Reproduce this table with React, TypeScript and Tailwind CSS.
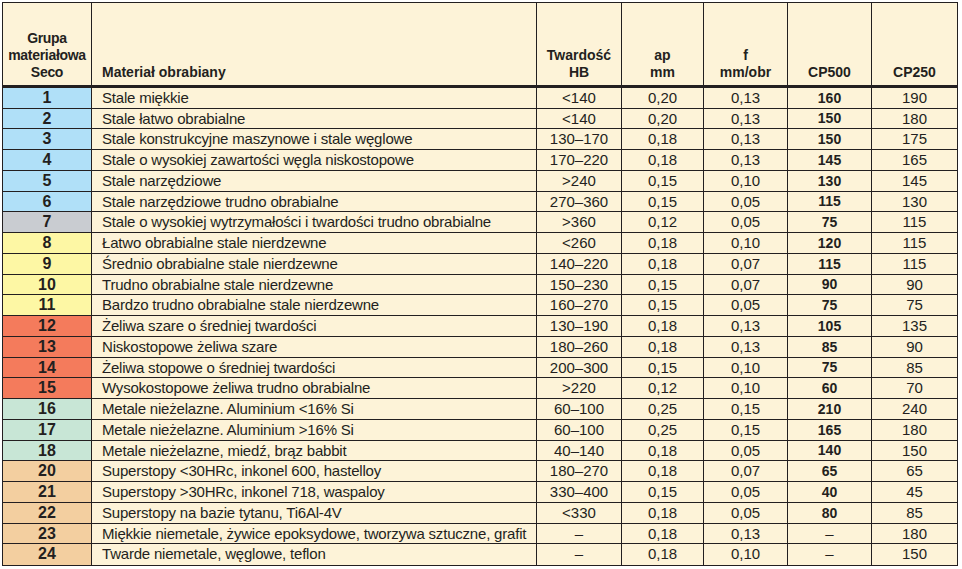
import React from "react";

const rows: { g: string; bg: string; name: string; hb: string; ap: string; f: string; cp5: string; cp2: string }[] = [
  { g: "1", bg: "bg-[#b0e0f8]", name: "Stale miękkie", hb: "<140", ap: "0,20", f: "0,13", cp5: "160", cp2: "190" },
  { g: "2", bg: "bg-[#b0e0f8]", name: "Stale łatwo obrabialne", hb: "<140", ap: "0,20", f: "0,13", cp5: "150", cp2: "180" },
  { g: "3", bg: "bg-[#b0e0f8]", name: "Stale konstrukcyjne maszynowe i stale węglowe", hb: "130–170", ap: "0,18", f: "0,13", cp5: "150", cp2: "175" },
  { g: "4", bg: "bg-[#b0e0f8]", name: "Stale o wysokiej zawartości węgla niskostopowe", hb: "170–220", ap: "0,18", f: "0,13", cp5: "145", cp2: "165" },
  { g: "5", bg: "bg-[#b0e0f8]", name: "Stale narzędziowe", hb: ">240", ap: "0,15", f: "0,10", cp5: "130", cp2: "145" },
  { g: "6", bg: "bg-[#b0e0f8]", name: "Stale narzędziowe trudno obrabialne", hb: "270–360", ap: "0,15", f: "0,05", cp5: "115", cp2: "130" },
  { g: "7", bg: "bg-[#c9ccd1]", name: "Stale o wysokiej wytrzymałości i twardości trudno obrabialne", hb: ">360", ap: "0,12", f: "0,05", cp5: "75", cp2: "115" },
  { g: "8", bg: "bg-[#fdf7a4]", name: "Łatwo obrabialne stale nierdzewne", hb: "<260", ap: "0,18", f: "0,10", cp5: "120", cp2: "115" },
  { g: "9", bg: "bg-[#fdf7a4]", name: "Średnio obrabialne stale nierdzewne", hb: "140–220", ap: "0,18", f: "0,07", cp5: "115", cp2: "115" },
  { g: "10", bg: "bg-[#fdf7a4]", name: "Trudno obrabialne stale nierdzewne", hb: "150–230", ap: "0,15", f: "0,07", cp5: "90", cp2: "90" },
  { g: "11", bg: "bg-[#fdf7a4]", name: "Bardzo trudno obrabialne stale nierdzewne", hb: "160–270", ap: "0,15", f: "0,05", cp5: "75", cp2: "75" },
  { g: "12", bg: "bg-[#f47b5c]", name: "Żeliwa szare o średniej twardości", hb: "130–190", ap: "0,18", f: "0,13", cp5: "105", cp2: "135" },
  { g: "13", bg: "bg-[#f47b5c]", name: "Niskostopowe żeliwa szare", hb: "180–260", ap: "0,18", f: "0,13", cp5: "85", cp2: "90" },
  { g: "14", bg: "bg-[#f47b5c]", name: "Żeliwa stopowe o średniej twardości", hb: "200–300", ap: "0,15", f: "0,10", cp5: "75", cp2: "85" },
  { g: "15", bg: "bg-[#f47b5c]", name: "Wysokostopowe żeliwa trudno obrabialne", hb: ">220", ap: "0,12", f: "0,10", cp5: "60", cp2: "70" },
  { g: "16", bg: "bg-[#c8e6d6]", name: "Metale nieżelazne. Aluminium <16% Si", hb: "60–100", ap: "0,25", f: "0,15", cp5: "210", cp2: "240" },
  { g: "17", bg: "bg-[#c8e6d6]", name: "Metale nieżelazne. Aluminium >16% Si", hb: "60–100", ap: "0,25", f: "0,15", cp5: "165", cp2: "180" },
  { g: "18", bg: "bg-[#c8e6d6]", name: "Metale nieżelazne, miedź, brąz babbit", hb: "40–140", ap: "0,18", f: "0,05", cp5: "140", cp2: "150" },
  { g: "20", bg: "bg-[#f3cfa0]", name: "Superstopy <30HRc, inkonel 600, hastelloy", hb: "180–270", ap: "0,18", f: "0,07", cp5: "65", cp2: "65" },
  { g: "21", bg: "bg-[#f3cfa0]", name: "Superstopy >30HRc, inkonel 718, waspaloy", hb: "330–400", ap: "0,15", f: "0,05", cp5: "40", cp2: "45" },
  { g: "22", bg: "bg-[#f3cfa0]", name: "Superstopy na bazie tytanu, Ti6Al-4V", hb: "<330", ap: "0,18", f: "0,05", cp5: "80", cp2: "85" },
  { g: "23", bg: "bg-[#f3cfa0]", name: "Miękkie niemetale, żywice epoksydowe, tworzywa sztuczne, grafit", hb: "–", ap: "0,18", f: "0,13", cp5: "–", cp2: "180" },
  { g: "24", bg: "bg-[#f3cfa0]", name: "Twarde niemetale, węglowe, teflon", hb: "–", ap: "0,18", f: "0,10", cp5: "–", cp2: "150" },
];

const cols = "grid grid-cols-[89px_445px_85px_82px_84px_84px_85px]";
const STEP = 20.74;

export default function App() {
  return (
    <div
      className="w-[962px] h-[569px] bg-white pt-[2px] pl-[2px] text-[#231f20]"
      style={{ fontFamily: '"Liberation Sans", Arial, sans-serif' }}
    >
      <div className="w-[956px] border border-[#231f20] bg-[#fdf3d8]">
        <div className={`${cols} h-[85px] border-b-[3px] border-[#231f20] text-[14px] font-bold leading-[17px]`}>
          <div className="flex items-end justify-center text-center pb-[4px] border-r border-[#231f20] tracking-[-0.3px]">
            Grupa<br />materiałowa<br />Seco
          </div>
          <div className="flex items-end pl-[10px] pb-[4px] border-r border-[#231f20]">Materiał obrabiany</div>
          <div className="flex items-end justify-center text-center pb-[4px] border-r border-[#231f20]">
            Twardość<br />HB
          </div>
          <div className="flex items-end justify-center text-center pb-[4px] border-r border-[#231f20]">
            ap<br />mm
          </div>
          <div className="flex items-end justify-center text-center pb-[4px] border-r border-[#231f20]">
            f<br />mm/obr
          </div>
          <div className="flex items-end justify-center text-center pb-[4px] border-r border-[#231f20]">CP500</div>
          <div className="flex items-end justify-center text-center pb-[4px]">CP250</div>
        </div>
        {rows.map((r, i) => {
          const tall = Math.round((i + 1) * STEP) - Math.round(i * STEP) === 21;
          const last = i === rows.length - 1;
          const dash = r.cp5 === "–";
          return (
            <div
              key={r.g}
              className={`${cols} ${tall ? "h-[21px]" : "h-[20px]"} text-[15px] ${tall ? "leading-[20px]" : "leading-[19px]"} ${last ? "" : "border-b border-[#231f20]"}`}
            >
              <div className={`${r.bg} text-center font-bold text-[16px] border-r border-[#231f20]`}>{r.g}</div>
              <div className="pl-[10px] whitespace-nowrap tracking-[-0.2px] border-r border-[#231f20]">{r.name}</div>
              <div className="text-center border-r border-[#231f20]">{r.hb}</div>
              <div className="text-center border-r border-[#231f20]">{r.ap}</div>
              <div className="text-center border-r border-[#231f20]">{r.f}</div>
              <div className={`text-center border-r border-[#231f20] ${dash ? "font-normal text-[15px]" : "font-bold text-[14px]"}`}>{r.cp5}</div>
              <div className="text-center">{r.cp2}</div>
            </div>
          );
        })}
      </div>
    </div>
  );
}
